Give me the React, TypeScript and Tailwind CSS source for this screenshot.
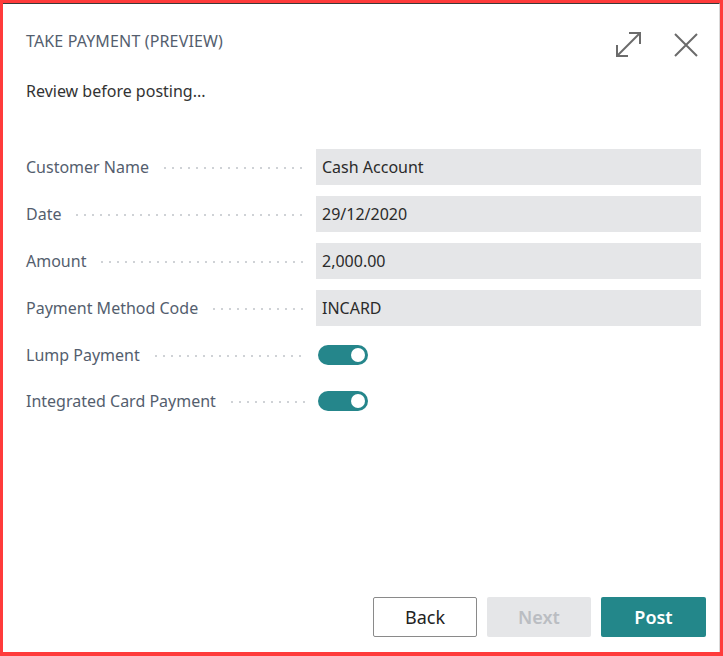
import React from "react";

const font = { fontFamily: '"Noto Sans", "Open Sans", sans-serif' };

function Leader() {
  return (
    <div className="flex-1 ml-3 mr-[9px] h-[2px] self-center mt-[2px] bg-[radial-gradient(circle,#cfd2d6_1px,transparent_1.2px)] bg-[length:8px_2px] bg-repeat-x" />
  );
}

function FieldRow({ label, value }: { label: string; value: string }) {
  return (
    <div className="flex items-center h-[36px]">
      <div className="w-[290px] flex items-center">
        <span className="text-[16px] text-[#545e6e] whitespace-nowrap">{label}</span>
        <Leader />
      </div>
      <div className="flex-1 h-[36px] bg-[#e5e6e8] flex items-center pl-[6px] text-[16px] text-[#2b2b2b]">
        {value}
      </div>
    </div>
  );
}

function ToggleRow({ label }: { label: string }) {
  return (
    <div className="flex items-center h-[35px]">
      <div className="w-[290px] flex items-center">
        <span className="text-[16px] text-[#545e6e] whitespace-nowrap">{label}</span>
        <Leader />
      </div>
      <div className="flex-1 flex items-center pl-[2px]">
        <div className="w-[50px] h-[20px] rounded-full bg-[#25868b] flex items-center justify-end pr-[3px]">
          <div className="w-[14px] h-[14px] rounded-full bg-white" />
        </div>
      </div>
    </div>
  );
}

export default function App() {
  return (
    <div className="w-[723px] h-[656px] bg-white" style={font}>
      <div className="w-full h-full border-[#ff3b3b] border-t-[3px] border-l-[3px] border-r-[3px] border-b-[4px] flex">
        <div className="flex-1 flex flex-col border-t border-r border-t-[#3a3a3a] border-r-[#d9d9d9]">
          <div className="flex items-start justify-between pl-[23px] pr-[21px] pt-[27px]">
            <div className="text-[16px] leading-[20px] tracking-[0.15px] text-[#545e6e]">TAKE PAYMENT (PREVIEW)</div>
            <div className="flex items-center gap-[32px]">
              <svg width="27" height="27" viewBox="0 0 27 27" fill="none" stroke="#6b6b6b" strokeWidth="2">
                <path d="M2 25 L25 2" />
                <path d="M14 2 H25 V13" />
                <path d="M2 14 V25 H13" />
              </svg>
              <svg width="24" height="24" viewBox="0 0 24 24" fill="none" stroke="#6b6b6b" strokeWidth="2">
                <path d="M1 1 L23 23 M23 1 L1 23" />
              </svg>
            </div>
          </div>
          <div className="pl-[23px] mt-[21px] text-[16px] text-[#333333]">Review before posting...</div>
          <div className="pl-[23px] pr-[18px] mt-[46px] flex flex-col gap-[11px]">
            <FieldRow label="Customer Name" value="Cash Account" />
            <FieldRow label="Date" value="29/12/2020" />
            <FieldRow label="Amount" value="2,000.00" />
            <FieldRow label="Payment Method Code" value="INCARD" />
            <ToggleRow label="Lump Payment" />
            <ToggleRow label="Integrated Card Payment" />
          </div>
          <div className="flex-1" />
          <div className="flex justify-end gap-[10px] pr-[13px] pb-[15px]">
            <button className="w-[104px] h-[40px] border border-[#8a8a8a] rounded-[2px] bg-white text-[18px] text-[#222]">Back</button>
            <button className="w-[104px] h-[40px] rounded-[2px] bg-[#e5e6e8] text-[18px] font-semibold text-[#babdc2]">Next</button>
            <button className="w-[105px] h-[40px] rounded-[2px] bg-[#23878a] text-[18px] font-semibold text-white">Post</button>
          </div>
        </div>
      </div>
    </div>
  );
}
